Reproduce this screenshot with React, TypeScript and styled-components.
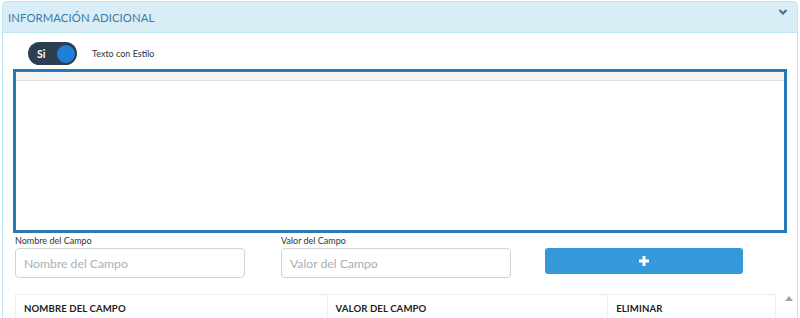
import React, { useState } from "react";
import styled, { createGlobalStyle } from "styled-components";

const GlobalStyle = createGlobalStyle`
  html, body {
    margin: 0;
    padding: 0;
    background: #ffffff;
    font-family: Lato, "Open Sans", sans-serif;
    overflow: hidden;
  }
  * { box-sizing: border-box; }
`;

const Panel = styled.div`
  margin: 1px 2px 0 2px;
  border: 1px solid #bce8f1;
  border-radius: 4px 4px 0 0;
  height: 330px;
  overflow: hidden;
`;

const PanelHeading = styled.div`
  height: 31px;
  background: #d9edf7;
  border-bottom: 1px solid #bce8f1;
  display: flex;
  align-items: center;
  justify-content: space-between;
  padding: 0 9px 0 5px;
  color: #3a7aa3;
  font-size: 11.3px;
  letter-spacing: 0.1px;
`;

const Chevron = styled.svg`
  width: 10px;
  height: 8px;
  margin-top: -10px;
`;

const PanelBody = styled.div`
  padding: 9px 0 0 10px;
`;

const ToggleRow = styled.div`
  display: flex;
  align-items: center;
  gap: 15px;
  padding-left: 15px;
  height: 23px;
`;

const Switch = styled.button<{ $on: boolean }>`
  width: 49px;
  height: 23px;
  border: none;
  border-radius: 12px;
  background: #2d3e50;
  position: relative;
  padding: 0 0 0 9px;
  display: flex;
  align-items: center;
  color: #fff;
  font-family: Lato, sans-serif;
  font-weight: 700;
  font-size: 10.5px;
  cursor: pointer;
  &::after {
    content: "";
    position: absolute;
    top: 2.5px;
    left: ${(p) => (p.$on ? "29px" : "3px")};
    width: 18px;
    height: 18px;
    border-radius: 50%;
    background: #1f7fd8;
  }
`;

const ToggleLabel = styled.span`
  font-size: 9px;
  color: #333;
`;

const Editor = styled.div`
  margin-top: 4px;
  width: 774px;
  height: 164px;
  border: 3px solid #2a78b4;
  display: flex;
  flex-direction: column;
`;

const EditorToolbar = styled.div`
  height: 9px;
  background: #f4f4f4;
  border-bottom: 1px solid #dedede;
`;

const EditorArea = styled.div`
  flex: 1;
  background: #fff;
  outline: none;
`;

const FieldRow = styled.div`
  display: grid;
  grid-template-columns: 266px 264px 200px;
  margin-top: 1px;
  padding-left: 2px;
  align-items: end;
`;

const Field = styled.div`
  display: flex;
  flex-direction: column;
`;

const FieldLabel = styled.label`
  font-size: 9px;
  color: #333;
  height: 13px;
  line-height: 13px;
  margin-bottom: 1px;
`;

const TextInput = styled.input`
  width: 230px;
  height: 30px;
  border: 1px solid #cfd3d6;
  border-radius: 4px;
  padding: 0 8px;
  font-family: Lato, sans-serif;
  font-size: 12.2px;
  color: #333;
  &::placeholder {
    color: #a6afb8;
  }
`;

const AddButton = styled.button`
  width: 198px;
  height: 26px;
  margin-bottom: 4px;
  border: none;
  border-radius: 3px;
  background: #3498db;
  display: flex;
  align-items: center;
  justify-content: center;
  cursor: pointer;
`;

const TableScroll = styled.div`
  margin-top: 16px;
  display: flex;
  gap: 7px;
`;

const Table = styled.table`
  width: 761px;
  margin-left: 2px;
  border-collapse: collapse;
  font-size: 9.6px;
`;

const Th = styled.th<{ $w: number }>`
  width: ${(p) => p.$w}px;
  text-align: left;
  font-weight: 700;
  color: #1e1e1e;
  padding: 8px 8px;
  border: 1px solid #eeeeee;
  letter-spacing: 0.1px;
`;

const ScrollBar = styled.div`
  width: 12px;
  display: flex;
  justify-content: center;
  padding-top: 1px;
`;

const App = () => {
  const [on, setOn] = useState(true);

  return (
    <>
      <GlobalStyle />
      <Panel>
        <PanelHeading>
          <span>INFORMACIÓN ADICIONAL</span>
          <Chevron viewBox="0 0 10 8">
            <path d="M1.5 2 L5 5.5 L8.5 2" fill="none" stroke="#3a6e92" strokeWidth="2" />
          </Chevron>
        </PanelHeading>
        <PanelBody>
          <ToggleRow>
            <Switch $on={on} onClick={() => setOn(!on)}>
              {on ? "Si" : ""}
            </Switch>
            <ToggleLabel>Texto con Estilo</ToggleLabel>
          </ToggleRow>
          <Editor>
            <EditorToolbar />
            <EditorArea contentEditable suppressContentEditableWarning />
          </Editor>
          <FieldRow>
            <Field>
              <FieldLabel htmlFor="nombre">Nombre del Campo</FieldLabel>
              <TextInput id="nombre" placeholder="Nombre del Campo" />
            </Field>
            <Field>
              <FieldLabel htmlFor="valor">Valor del Campo</FieldLabel>
              <TextInput id="valor" placeholder="Valor del Campo" />
            </Field>
            <AddButton>
              <svg width="12" height="12" viewBox="0 0 12 12">
                <path d="M6 1 V11 M1 6 H11" stroke="#fff" strokeWidth="3" />
              </svg>
            </AddButton>
          </FieldRow>
          <TableScroll>
            <Table>
              <thead>
                <tr>
                  <Th $w={312}>NOMBRE DEL CAMPO</Th>
                  <Th $w={281}>VALOR DEL CAMPO</Th>
                  <Th $w={168}>ELIMINAR</Th>
                </tr>
              </thead>
            </Table>
            <ScrollBar>
              <svg width="8" height="6" viewBox="0 0 8 6">
                <path d="M0 6 L4 1 L8 6 Z" fill="#a3a3a3" />
              </svg>
            </ScrollBar>
          </TableScroll>
        </PanelBody>
      </Panel>
    </>
  );
};

export default App;
